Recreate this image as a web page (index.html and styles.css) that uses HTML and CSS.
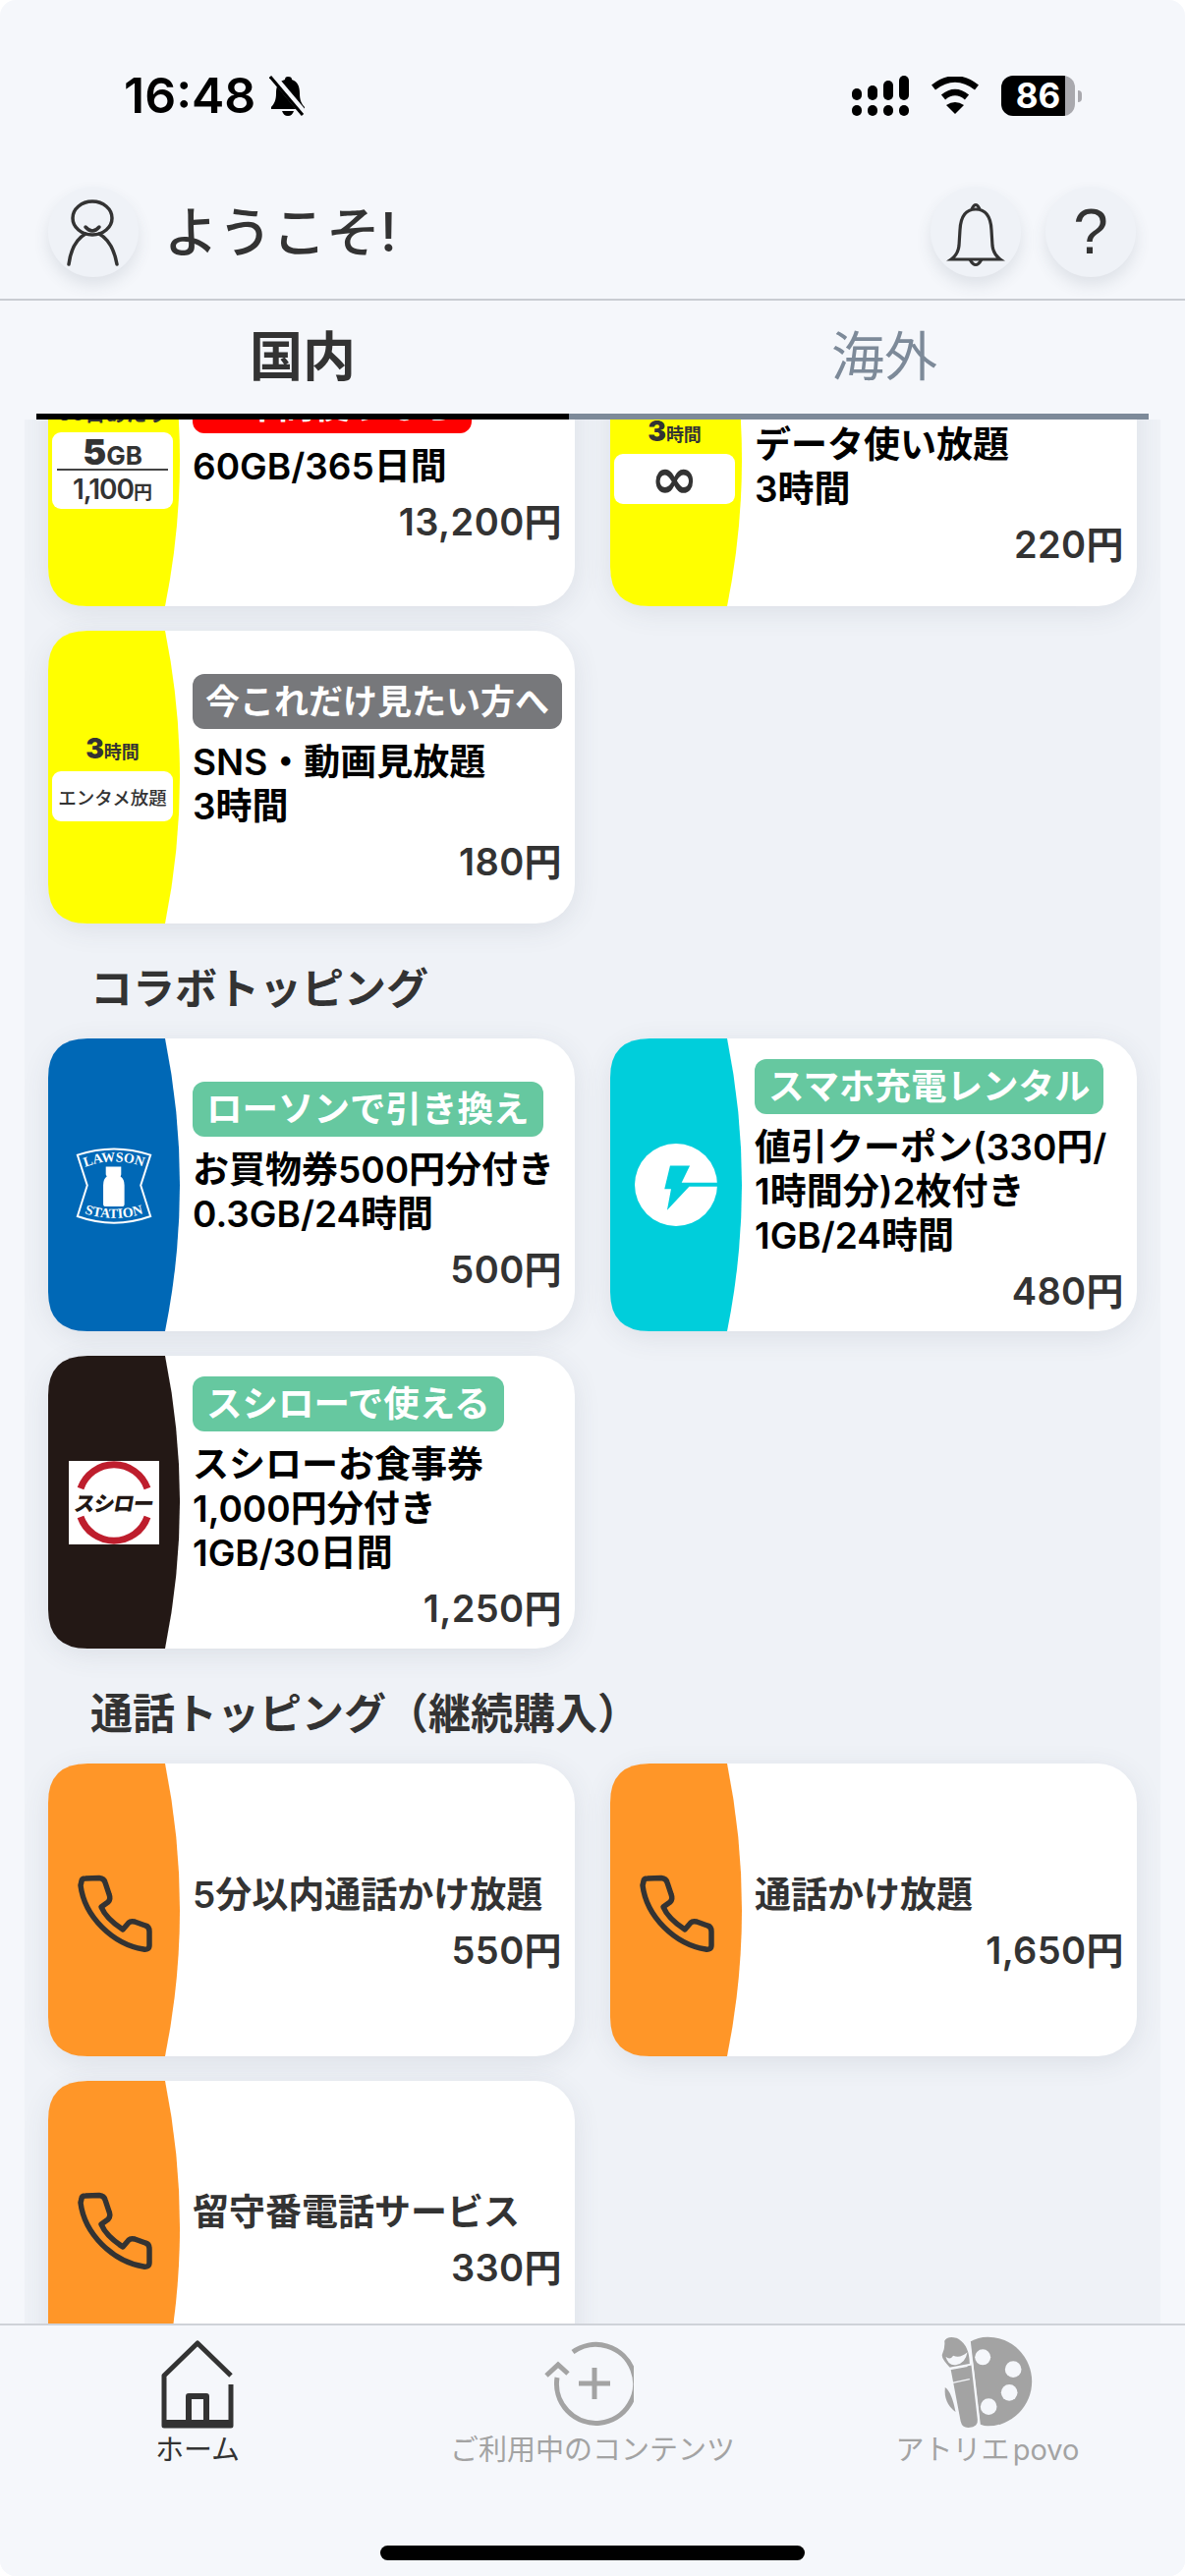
FILE: index.html
```html
<!DOCTYPE html>
<html lang="ja">
<head>
<meta charset="utf-8">
<title>povo</title>
<link rel="stylesheet" href="styles.css">
</head>
<body>
<div class="app">
  <div class="status">
    <div class="status-left">
      <span class="time">16:48</span>
      <svg class="mute" viewBox="0 0 38 41"><path d="M19 1c-2 0-3 1-3 3C9 6 7 11 7 18c0 7-2 11-5 14v2h34v-2c-3-3-5-7-5-14 0-7-2-12-8-14 0-2-1-3-4-3z"/><path d="M13 36h12c-1 3-3 5-6 5s-5-2-6-5z"/><path class="mute-cut" d="M4 1l32 38"/><path class="mute-line" d="M1 1l33 39"/></svg>
    </div>
    <div class="status-right">
      <svg class="signal" viewBox="0 0 58 41"><rect x="0" y="13" width="10" height="12" rx="5"/><rect x="16" y="10" width="10" height="15" rx="5"/><rect x="32" y="5" width="10" height="20" rx="5"/><rect x="48" y="0" width="10" height="25" rx="5"/><rect x="0" y="30" width="10" height="11" rx="5"/><rect x="16" y="30" width="10" height="11" rx="5"/><rect x="32" y="30" width="10" height="11" rx="5"/><rect x="48" y="30" width="10" height="11" rx="5"/></svg>
      <svg class="wifi" viewBox="0 0 50 38"><path d="M3 11Q25-6 47 11" /><path d="M13 21Q25 11 37 21"/><path class="wifi-dot" d="M16 29Q25 23 34 29L25 38Z"/></svg>
      <div class="battery"><div class="battery-body">86</div><div class="battery-nub"></div></div>
    </div>
  </div>

  <header class="header">
    <div class="round">
      <svg class="icon-avatar" viewBox="0 0 60 70"><ellipse cx="29" cy="20" rx="20" ry="17"/><path d="M22 29Q29 37 36 29"/><path d="M22 36Q8 44 5 67"/><path d="M36 36Q50 44 54 67"/></svg>
    </div>
    <h1 class="welcome">ようこそ!</h1>
    <div class="round round-bell">
      <svg class="icon-bell" viewBox="0 0 60 68"><path d="M30 9Q15 9 14 30L13 46Q12 55 5 60H55Q48 55 47 46L46 30Q45 9 30 9Z"/><path d="M26 9Q30 0 34 9"/><path d="M24 60Q30 71 36 60"/></svg>
    </div>
    <div class="round"><span class="help">?</span></div>
  </header>

  <nav class="tabs">
    <div class="tab tab-on">国内</div>
    <div class="tab tab-off">海外</div>
  </nav>

  <main class="scroller">
    <div class="scroll-inner">
      <section class="grid">
        <article class="card">
          <div class="side side-yellow">
            <div class="side-caption">30日あたり</div>
            <div class="price-box"><div class="pb-gb"><b>5</b>GB</div><div class="pb-yen"><b>1,100</b>円</div></div>
          </div>
          <div class="body">
            <div class="badge badge-red">一年間使うなら</div>
            <div class="title">60GB/365日間</div>
            <div class="price">13,200円</div>
          </div>
        </article>
        <article class="card">
          <div class="side side-yellow">
            <div class="side-hours"><b>3</b>時間</div>
            <div class="white-box inf">∞</div>
          </div>
          <div class="body">
            <div class="badge badge-gray"></div>
            <div class="title">データ使い放題<br>3時間</div>
            <div class="price">220円</div>
          </div>
        </article>
        <article class="card">
          <div class="side side-yellow">
            <div class="side-hours"><b>3</b>時間</div>
            <div class="white-box ent">エンタメ放題</div>
          </div>
          <div class="body">
            <div class="badge badge-gray badge-tight">今これだけ見たい方へ</div>
            <div class="title">SNS・動画見放題<br>3時間</div>
            <div class="price">180円</div>
          </div>
        </article>
      </section>

      <h2 class="section-title">コラボトッピング</h2>
      <section class="grid">
        <article class="card">
          <div class="side side-blue">
            <svg class="logo-lawson" viewBox="110 200 240 250">
              <path class="ll-out" d="M118 232Q230 195 342 232L312 325L342 420Q230 460 118 420L148 325Z"/>
              <path id="ll-top" class="ll-none" d="M132 272Q230 232 328 272"/>
              <path id="ll-bot" class="ll-none" d="M130 408Q230 442 330 408"/>
              <text class="ll-text"><textPath href="#ll-top" startOffset="50%">LAWSON</textPath></text>
              <text class="ll-text"><textPath href="#ll-bot" startOffset="50%">STATION</textPath></text>
              <path class="ll-fill" d="M205 268H252V292L250 298Q262 305 262 325V382Q262 390 254 390H205Q197 390 197 382V325Q197 305 208 298L205 292Z"/>
            </svg>
          </div>
          <div class="body">
            <div class="badge badge-green">ローソンで引き換え</div>
            <div class="title">お買物券500円分付き<br>0.3GB/24時間</div>
            <div class="price">500円</div>
          </div>
        </article>
        <article class="card">
          <div class="side side-cyan">
            <svg class="logo-bolt" viewBox="30 30 250 250">
              <circle class="bolt-disc" cx="155" cy="155" r="125"/>
              <path class="bolt-cut" d="M137 97H197L172 148H285V160H195L128 232L140 168H120Z"/>
            </svg>
          </div>
          <div class="body">
            <div class="badge badge-green">スマホ充電レンタル</div>
            <div class="title">値引クーポン(330円/<br>1時間分)2枚付き<br>1GB/24時間</div>
            <div class="price">480円</div>
          </div>
        </article>
        <article class="card">
          <div class="side side-black">
            <div class="logo-sushiro">
              <svg class="sushiro-ring" viewBox="0 0 92 85"><path d="M12 28A36 36 0 0 1 80 28"/><path d="M12 57A36 36 0 0 0 80 57"/></svg>
              <span class="sushiro-text">スシロー</span>
            </div>
          </div>
          <div class="body">
            <div class="badge badge-green">スシローで使える</div>
            <div class="title">スシローお食事券<br>1,000円分付き<br>1GB/30日間</div>
            <div class="price">1,250円</div>
          </div>
        </article>
      </section>

      <h2 class="section-title">通話トッピング（継続購入）</h2>
      <section class="grid">
        <article class="card">
          <div class="side side-orange">
            <svg class="phone" viewBox="-4 -2 100 95"><path d="M13 14Q13 11 17 11L31 10.5Q36 11 37 15L41 27Q43 32 40 35L33 40Q38 52 55 63L61 56Q63 54 67 55L78 59Q82 60 82 65L82 79Q82 84 76 83C45 78 16 50 12 18Z"/></svg>
          </div>
          <div class="body">
            <div class="title title-call">5分以内通話かけ放題</div>
            <div class="price">550円</div>
          </div>
        </article>
        <article class="card">
          <div class="side side-orange">
            <svg class="phone" viewBox="-4 -2 100 95"><path d="M13 14Q13 11 17 11L31 10.5Q36 11 37 15L41 27Q43 32 40 35L33 40Q38 52 55 63L61 56Q63 54 67 55L78 59Q82 60 82 65L82 79Q82 84 76 83C45 78 16 50 12 18Z"/></svg>
          </div>
          <div class="body">
            <div class="title title-call">通話かけ放題</div>
            <div class="price">1,650円</div>
          </div>
        </article>
        <article class="card">
          <div class="side side-orange">
            <svg class="phone" viewBox="-4 -2 100 95"><path d="M13 14Q13 11 17 11L31 10.5Q36 11 37 15L41 27Q43 32 40 35L33 40Q38 52 55 63L61 56Q63 54 67 55L78 59Q82 60 82 65L82 79Q82 84 76 83C45 78 16 50 12 18Z"/></svg>
          </div>
          <div class="body">
            <div class="title title-call">留守番電話サービス</div>
            <div class="price">330円</div>
          </div>
        </article>
      </section>
    </div>
  </main>

  <footer class="nav">
    <div class="nav-items">
      <div class="nav-item nav-on">
        <svg class="nav-icon home" viewBox="0 0 76 90"><path d="M72 36L38 3L4 36V87H72V45"/><path class="home-base" d="M3 81H73V89H3Z"/><path class="home-door" d="M29 83V57H47V83"/></svg>
        <span>ホーム</span>
      </div>
      <div class="nav-item">
        <svg class="nav-icon renew" viewBox="0 0 92 90"><path d="M30 12A40 40 0 1 1 14 38"/><path d="M3 36L15 25L25 34"/><path d="M52 28V60M36 44H68"/></svg>
        <span>ご利用中のコンテンツ</span>
      </div>
      <div class="nav-item">
        <svg class="nav-icon palette" viewBox="170 50 290 300">
          <path class="pal-fill" d="M268 72Q290 58 320 58A135 136 0 0 1 320 330Q310 330 298 325L276 140Z"/>
          <circle class="pal-hole" cx="305" cy="120" r="24"/>
          <circle class="pal-hole" cx="398" cy="157" r="25"/>
          <circle class="pal-hole" cx="386" cy="228" r="25"/>
          <circle class="pal-hole" cx="323" cy="271" r="25"/>
          <path class="pal-fill" d="M190 212Q210 225 222 287Q185 260 190 212Z"/>
          <path class="pal-brush" d="M203 150L272 136L292 310Q295 335 262 338Q240 339 235 318Z"/>
          <path class="pal-brush" d="M185 70Q195 50 225 58Q262 75 267 125L268 142L203 154Q175 125 178 112Q188 90 185 70Z"/>
          <path class="pal-hole" d="M192 118Q205 130 215 115Q235 125 258 105Q252 138 225 143Q200 148 192 118Z"/>
          <path class="pal-line" d="M205 157L258 147M213 198L265 187"/>
        </svg>
        <span class="label-wide">アトリエ povo</span>
      </div>
    </div>
    <div class="home-bar"></div>
  </footer>
</div>
</body>
</html>
```
FILE: styles.css
```css
* { box-sizing: border-box; margin: 0; padding: 0; }
html, body { width: 1206px; height: 2622px; overflow: hidden; background: #fff; }
body { font-family: Inter, "Noto Sans CJK JP", sans-serif; color: #333; }

.app { width: 1206px; height: 2622px; background: #f5f7fb; border-radius: 16px; overflow: hidden; display: flex; flex-direction: column; }

/* status */
.status { height: 190px; flex: none; display: flex; justify-content: space-between; padding: 77px 109px 0 126px; }
.status-left { display: flex; align-items: flex-start; gap: 14px; }
.time { font-size: 50px; font-weight: 600; line-height: 41px; color: #000; }
.mute { width: 38px; height: 41px; fill: #000; }
.mute-cut { fill: none; stroke: #f5f7fb; stroke-width: 7; }
.mute-line { fill: none; stroke: #000; stroke-width: 3; }
.status-right { display: flex; align-items: flex-start; gap: 22px; }
.signal { width: 58px; height: 41px; fill: #000; }
.wifi { width: 50px; height: 38px; fill: none; stroke: #000; stroke-width: 6.5; margin-top: 1px; }
.wifi-dot { fill: #000; stroke: none; }
.battery { display: flex; align-items: center; gap: 3px; margin-right: -4px; }
.battery-body { width: 75px; height: 41px; border-radius: 12px; background: linear-gradient(90deg, #000 65px, #a9a9ae 65px); color: #fff; font-size: 35px; font-weight: 700; line-height: 41px; text-align: center; }
.battery-nub { width: 4px; height: 12px; background: #a9a9ae; border-radius: 0 4px 4px 0; }

/* header */
.header { height: 116px; flex: none; display: flex; align-items: flex-start; padding: 0 50px 0 49px; border-bottom: 2px solid #c9ccd2; }
.round { width: 92px; height: 92px; flex: none; border-radius: 50%; background: #eff2f7; box-shadow: 0 8px 16px rgba(60, 70, 90, .12); display: flex; align-items: center; justify-content: center; }
.round-bell { margin-right: 25px; }
.welcome { margin-left: 26px; margin-right: auto; font-size: 55px; font-weight: 500; line-height: 92px; color: #333; }
.icon-avatar { width: 60px; height: 70px; fill: none; stroke: #333; stroke-width: 3.5; stroke-linecap: round; margin-top: 2px; }
.icon-bell { width: 60px; height: 68px; fill: none; stroke: #333; stroke-width: 3.2; margin-top: 4px; }
.help { font-family: "Liberation Sans", sans-serif; font-size: 64px; line-height: 64px; color: #333; }

/* tabs */
.tabs { flex: none; height: 121px; display: flex; padding-left: 37px; }
.tab { height: 121px; font-size: 54px; line-height: 115px; text-align: center; border-bottom: 6px solid; }
.tab-on { width: 542px; font-weight: 700; color: #333; border-color: #000; }
.tab-off { width: 590px; padding-left: 52px; font-weight: 400; color: #7d8a99; border-color: #7d8a99; }

/* scroller */
.scroller { flex: 1; min-height: 0; overflow: hidden; margin: 0 25px; background: #eff2f7; }
.scroll-inner { margin-top: -108px; padding: 0 24px; }
.grid { display: grid; grid-template-columns: 1fr 1fr; column-gap: 36px; row-gap: 25px; }
.section-title { font-size: 43px; font-weight: 600; line-height: 60px; color: #333; margin: 36px 0 21px 43px; }

.card { height: 298px; background: #fff; border-radius: 40px; display: flex; box-shadow: 0 6px 28px rgba(60, 70, 90, .1); }
.side { width: 134px; height: 298px; flex: none; display: flex; flex-direction: column; align-items: center; justify-content: center; clip-path: path("M40 0H119Q149 149 119 298H40Q0 298 0 258V40Q0 0 40 0Z"); }
.side-yellow { background: #ffff00; padding-right: 3px; }
.side-blue { background: #0068b6; }
.side-cyan { background: #00cedb; }
.side-black { background: #231815; }
.side-orange { background: #ff9628; }

.body { flex: 1; min-width: 0; padding: 0 13px; display: flex; flex-direction: column; justify-content: center; }
.badge { align-self: flex-start; height: 56px; padding: 0 14px; border-radius: 12px; color: #fff; font-size: 36.5px; font-weight: 600; line-height: 56px; margin-bottom: 11px; white-space: nowrap; }
.badge-red { background: #ff0000; }
.badge-gray { background: #77787b; }
.badge-green { background: #66c8a0; }
.badge-tight { font-size: 35px; padding: 0 13px; }
.title { font-size: 37px; font-weight: 600; line-height: 45px; color: #000; white-space: nowrap; }
.title-call { color: #333; margin-top: 22px; }
.price { margin-top: 14px; font-size: 38px; letter-spacing: .4px; font-weight: 600; line-height: 40px; color: #333; text-align: right; }

/* side content */
.side-caption { font-size: 21px; font-weight: 700; line-height: 22px; color: #333; white-space: nowrap; margin-bottom: 8px; }
.side-hours { font-size: 18px; font-weight: 700; line-height: 32px; color: #333; margin-bottom: 3px; }
.side-hours b { font-size: 28px; }
.price-box { width: 123px; height: 78px; border-radius: 9px; background: #fff; color: #333; display: flex; flex-direction: column; align-items: stretch; padding: 0 5px; text-align: center; margin-bottom: 8px; }
.pb-gb { height: 39px; line-height: 40px; font-size: 26px; font-weight: 700; border-bottom: 2px solid #444; }
.pb-gb b { font-size: 36px; }
.pb-yen { line-height: 38px; font-size: 19px; font-weight: 600; white-space: nowrap; }
.pb-yen b { font-size: 28px; font-weight: 600; letter-spacing: -1px; }
.white-box { width: 123px; height: 51px; border-radius: 9px; background: #fff; color: #333; display: flex; align-items: center; justify-content: center; }
.inf { font-size: 58px; line-height: 51px; font-weight: 700; font-family: "DejaVu Sans", sans-serif; }
.ent { font-size: 18.5px; font-weight: 500; white-space: nowrap; }

/* logos */
.logo-lawson { width: 80px; height: 83px; }
.ll-out { fill: none; stroke: #fff; stroke-width: 6; }
.ll-none { fill: none; }
.ll-text { fill: #fff; font-family: "Liberation Serif", serif; font-weight: 700; font-size: 42px; text-anchor: middle; }
.ll-fill { fill: #fff; }
.logo-bolt { width: 84px; height: 84px; margin-top: -1px; }
.bolt-disc { fill: #fff; }
.bolt-cut { fill: #00cedb; }
.logo-sushiro { width: 92px; height: 85px; background: #fff; position: relative; display: flex; align-items: center; justify-content: center; margin-left: -1px; }
.sushiro-ring { position: absolute; inset: 0; width: 92px; height: 85px; fill: none; stroke: #be1e2d; stroke-width: 7; }
.sushiro-text { position: relative; font-family: "Noto Sans CJK JP", sans-serif; font-size: 21px; font-weight: 900; line-height: 24px; color: #231815; white-space: nowrap; letter-spacing: -1px; transform: skewX(-10deg); }
.phone { width: 100px; height: 95px; fill: none; stroke: #333; stroke-width: 5.5; stroke-linejoin: round; margin-top: 4px; }

/* bottom nav */
.nav { flex: none; height: 257px; border-top: 2px solid #cfd2d8; background: #f5f7fb; display: flex; flex-direction: column; align-items: center; position: relative; z-index: 1; }
.nav-items { width: 100%; display: grid; grid-template-columns: repeat(3, 1fr); padding-top: 9px; }
.nav-item { display: flex; flex-direction: column; align-items: center; height: 140px; font-size: 29px; line-height: 36px; color: #a3a3a3; white-space: nowrap; }
.nav-on { color: #333; }
.nav-icon { height: 100px; flex: none; }
.home { width: 76px; height: 90px; margin: 6px 0 4px; fill: none; stroke: #333; stroke-width: 5; stroke-linejoin: round; }
.home-base { fill: #333; stroke: none; }
.home-door { stroke-width: 6; }
.renew { width: 92px; height: 90px; margin: 6px 0 4px -8px; fill: none; stroke: #a3a3a3; stroke-width: 5; }
.palette { width: 97px; height: 100px; margin-left: -4px; }
.pal-fill, .pal-brush { fill: #a3a3a3; }
.pal-brush { stroke: #f5f7fb; stroke-width: 6; }
.pal-hole { fill: #f5f7fb; }
.pal-line { fill: none; stroke: #f5f7fb; stroke-width: 4; }
.label-wide { word-spacing: -5px; }
.home-bar { margin-top: 75px; width: 432px; height: 15px; border-radius: 8px; background: #000; }
```
